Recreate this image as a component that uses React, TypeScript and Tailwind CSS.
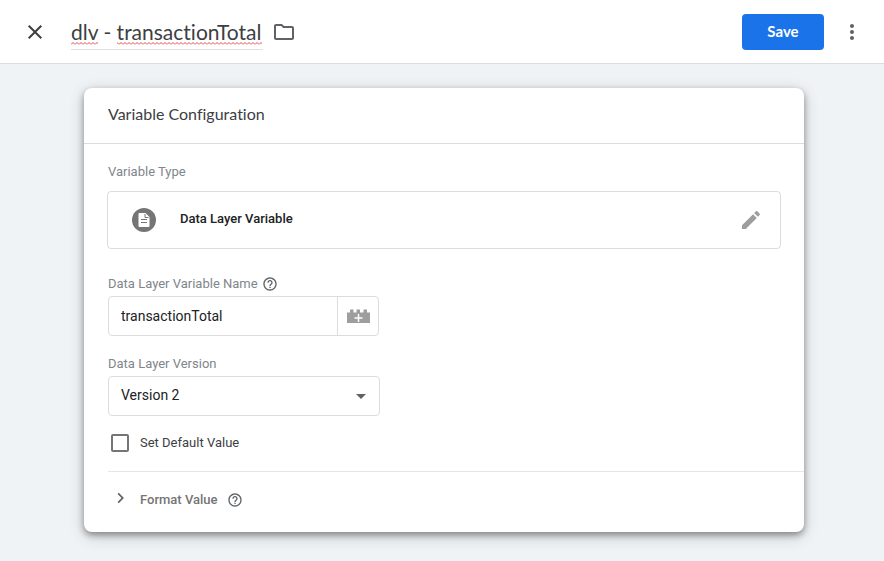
import { useState } from "react";

const labelClass = "text-[13px] leading-4 text-[#80868b]";

function HelpIcon() {
  return (
    <svg viewBox="0 0 24 24" className="size-4 fill-[#5f6368]" aria-hidden="true">
      <path d="M11 18h2v-2h-2v2zm1-16C6.48 2 2 6.48 2 12s4.48 10 10 10 10-4.48 10-10S17.52 2 12 2zm0 18c-4.41 0-8-3.59-8-8s3.59-8 8-8 8 3.59 8 8-3.59 8-8 8zm0-14c-2.21 0-4 1.79-4 4h2c0-1.1.9-2 2-2s2 .9 2 2c0 2-3 1.75-3 5h2c0-2.25 3-2.5 3-5 0-2.21-1.79-4-4-4z" />
    </svg>
  );
}

function BrickIcon() {
  return (
    <svg viewBox="0 0 23 14" className="h-[14px] w-[23px]" aria-hidden="true">
      <path fill="#9e9e9e" d="M0 3.500h3V.5h3.500v3h3V.5H13v3h3.500V.5H20v3h3V14H0z" />
      <path fill="#fff" d="M10.750 5h1.500v3.250h3.250v1.500h-3.250V13h-1.500V9.750H7.500v-1.500h3.250z" />
    </svg>
  );
}

function Header() {
  const [name, setName] = useState("dlv - transactionTotal");

  return (
    <header className="flex h-16 items-center border-b border-[#dadce0] bg-white pr-5 pl-[23px]">
      <button aria-label="Close" className="cursor-pointer">
        <svg viewBox="0 0 24 24" className="size-6 fill-[#3c4043]" aria-hidden="true">
          <path d="M19 6.410 17.590 5 12 10.590 6.410 5 5 6.410 10.590 12 5 17.590 6.410 19 12 13.410 17.590 19 19 17.590 13.410 12z" />
        </svg>
      </button>
      <div className="relative ml-6 w-48">
        <input
          aria-label="Variable name"
          spellCheck={false}
          value={name}
          onChange={(e) => setName(e.target.value)}
          className="h-9 w-full border-b border-[#e0e0e0] bg-transparent font-['Lato',sans-serif] text-[21px] text-[#3c4043] outline-none [font-variant-ligatures:none]"
        />
        <svg className="pointer-events-none absolute top-7 left-0 h-[3px] w-full" aria-hidden="true">
          <defs>
            <pattern id="squiggle" width="4" height="3" patternUnits="userSpaceOnUse">
              <path d="M0 2.500 2 .5 4 2.500" fill="none" stroke="#e5484d" strokeWidth="1" />
            </pattern>
          </defs>
          <rect width="27" height="3" fill="url(#squiggle)" />
          <rect x="46" width="145" height="3" fill="url(#squiggle)" />
        </svg>
      </div>
      <button aria-label="Move to folder" className="ml-[9px] cursor-pointer">
        <svg viewBox="0 0 24 24" className="size-6 fill-[#5f6368]" aria-hidden="true">
          <path d="M9.170 6l2 2H20v10H4V6h5.170M10 4H4c-1.100 0-1.990.9-1.990 2L2 18c0 1.100.9 2 2 2h16c1.100 0 2-.9 2-2V8c0-1.100-.9-2-2-2h-8l-2-2z" />
        </svg>
      </button>
      <button className="ml-auto h-9 w-[82px] cursor-pointer rounded bg-[#1a73e8] font-['Lato',sans-serif] text-[15px] font-bold text-white">
        Save
      </button>
      <button aria-label="More actions" className="ml-4 cursor-pointer">
        <svg viewBox="0 0 24 24" className="size-6 fill-[#5f6368]" aria-hidden="true">
          <path d="M12 8c1.100 0 2-.9 2-2s-.9-2-2-2-2 .9-2 2 .9 2 2 2zm0 2c-1.100 0-2 .9-2 2s.9 2 2 2 2-.9 2-2-.9-2-2-2zm0 6c-1.100 0-2 .9-2 2s.9 2 2 2 2-.9 2-2-.9-2-2-2z" />
        </svg>
      </button>
    </header>
  );
}

export default function App() {
  const [layerName, setLayerName] = useState("transactionTotal");
  const [version, setVersion] = useState("2");
  const [hasDefault, setHasDefault] = useState(false);

  return (
    <div className="min-h-screen bg-[#eff3f6] font-['Roboto',sans-serif]">
      <Header />
      <main className="pt-6 pr-20 pb-7 pl-21">
        <section className="rounded-lg bg-white shadow-[0_3px_6px_rgba(0,0,0,0.35),0_4px_16px_rgba(0,0,0,0.2)]">
          <h2 className="border-b border-[#dadce0] px-6 pt-[14px] pb-[17px] font-['Lato',sans-serif] text-base text-[#3c4043] [font-variant-ligatures:none]">
            Variable Configuration
          </h2>

          <div className="px-6 pt-5">
            <p className={labelClass}>Variable Type</p>
            <div className="-mx-px mt-[11px]">
              <button className="flex h-[58px] w-full cursor-pointer items-center rounded border border-[#dadce0] pr-[17px] pl-6 text-left">
                <svg viewBox="0 0 24 24" className="size-6" aria-hidden="true">
                  <circle cx="12" cy="12" r="12" fill="#757575" />
                  <path fill="#fff" d="M7.500 5h6l4 4v9a1 1 0 0 1-1 1h-9a1 1 0 0 1-1-1V6a1 1 0 0 1 1-1z" />
                  <path stroke="#757575" d="M9 11.500h6M9 14.500h6" />
                  <path fill="none" stroke="#757575" d="M13 6v3.500h3.500" />
                </svg>
                <span className="ml-6 pb-0.5 text-[13px] font-medium text-[#202124]">Data Layer Variable</span>
                <svg viewBox="0 0 24 24" className="ml-auto size-6 fill-[#9e9e9e]" aria-hidden="true">
                  <path d="M3 17.250V21h3.750L17.810 9.940l-3.750-3.750L3 17.250zM20.710 7.040c.39-.39.39-1.020 0-1.410l-2.340-2.340c-.39-.39-1.020-.39-1.410 0l-1.830 1.830 3.750 3.750 1.830-1.830z" />
                </svg>
              </button>
            </div>

            <div className="mt-[27px] flex items-center gap-1">
              <label htmlFor="layer-name" className={labelClass}>
                Data Layer Variable Name
              </label>
              <HelpIcon />
            </div>
            <div className="mt-1 flex h-10 w-[271px] rounded border border-[#dadce0]">
              <input
                id="layer-name"
                value={layerName}
                onChange={(e) => setLayerName(e.target.value)}
                className="min-w-0 flex-1 px-3 text-sm text-[#202124] outline-none"
              />
              <button
                aria-label="Insert variable"
                className="flex w-[41px] cursor-pointer items-center justify-center border-l border-[#dadce0]"
              >
                <BrickIcon />
              </button>
            </div>

            <label htmlFor="layer-version" className={`mt-5 block ${labelClass}`}>
              Data Layer Version
            </label>
            <div className="relative mt-1 w-[272px]">
              <select
                id="layer-version"
                value={version}
                onChange={(e) => setVersion(e.target.value)}
                className="h-10 w-full cursor-pointer appearance-none rounded border border-[#dadce0] bg-white px-3 pb-0.5 text-sm text-[#202124] outline-none"
              >
                <option value="1">Version 1</option>
                <option value="2">Version 2</option>
              </select>
              <svg
                viewBox="0 0 10 5"
                className="pointer-events-none absolute top-[18px] right-[14px] h-[5px] w-[10px] fill-[#616161]"
                aria-hidden="true"
              >
                <path d="M0 0h10L5 5z" />
              </svg>
            </div>

            <label className="mt-[18px] ml-[3px] flex w-fit cursor-pointer items-center gap-[11px] text-[13px] leading-[18px] text-[#3c4043]">
              <input
                type="checkbox"
                checked={hasDefault}
                onChange={(e) => setHasDefault(e.target.checked)}
                className="size-[18px] cursor-pointer appearance-none rounded-xs border-2 border-[#757575] checked:bg-[#1a73e8]"
              />
              Set Default Value
            </label>
          </div>

          <div className="mt-[19px] ml-6 flex items-center border-t border-[#e4e7ea] pt-5 pb-6">
            <button className="flex cursor-pointer items-center text-[13px] leading-4 font-medium text-[#757575]">
              <span className="flex h-4 w-6 items-start justify-center">
                <svg viewBox="7 5 10 14" className="h-3 w-[9px] fill-[#5f6368]" aria-hidden="true">
                  <path d="M10 6 8.590 7.410 13.170 12l-4.580 4.590L10 18l6-6z" />
                </svg>
              </span>
              <span className="ml-2">Format Value</span>
            </button>
            <span className="ml-[9px]">
              <HelpIcon />
            </span>
          </div>
        </section>
      </main>
    </div>
  );
}
